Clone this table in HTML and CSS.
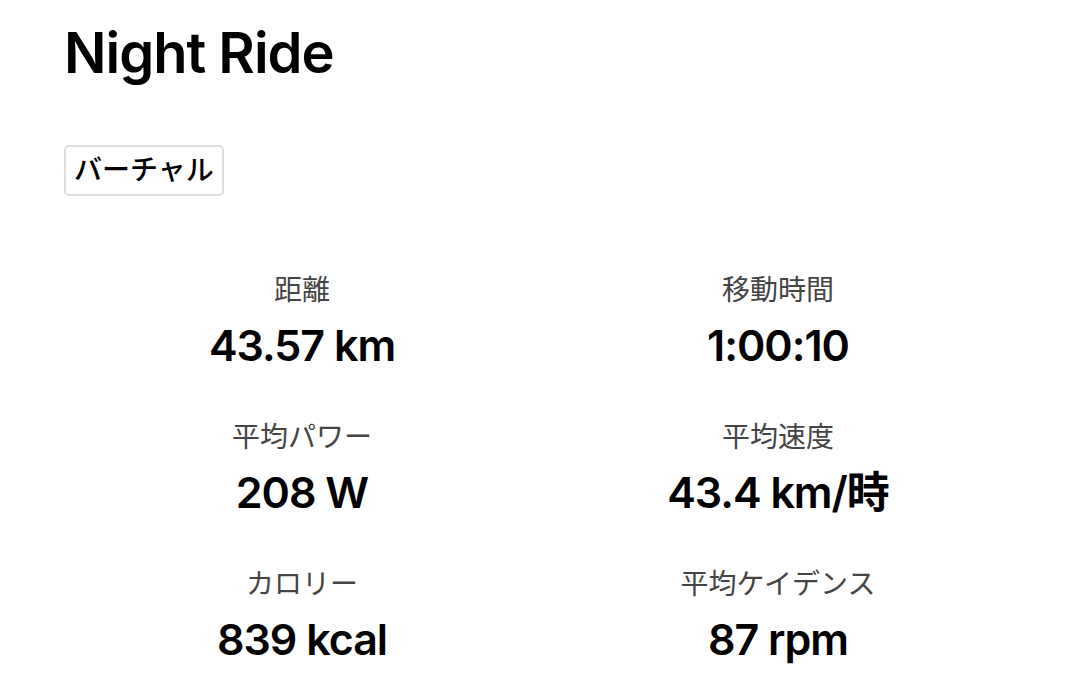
FILE: index.html
```html
<!DOCTYPE html>
<html lang="ja">
<head>
<meta charset="utf-8">
<title>Night Ride</title>
<link rel="stylesheet" href="styles.css">
</head>
<body>
<main class="page">
  <h1 class="title">Night Ride</h1>
  <div class="tags"><span class="tag">バーチャル</span></div>
  <section class="stats">
    <div class="stat"><div class="label">距離</div><div class="value">43.57 km</div></div>
    <div class="stat"><div class="label">移動時間</div><div class="value">1:00:10</div></div>
    <div class="stat"><div class="label">平均パワー</div><div class="value">208 W</div></div>
    <div class="stat"><div class="label">平均速度</div><div class="value">43.4 km/時</div></div>
    <div class="stat"><div class="label">カロリー</div><div class="value">839 kcal</div></div>
    <div class="stat"><div class="label">平均ケイデンス</div><div class="value">87 rpm</div></div>
  </section>
</main>
</body>
</html>
```
FILE: styles.css
```css
html, body {
  margin: 0;
  padding: 0;
  background: #fff;
}
body {
  font-family: Inter, "Noto Sans CJK JP", sans-serif;
  color: #000;
}
.page {
  padding: 20px 64px 0 64px;
}
.title {
  margin: 0;
  font-size: 56px;
  font-weight: 600;
  line-height: 1.2;
  letter-spacing: -1px;
}
.tags {
  margin-top: 58px;
  display: flex;
}
.tag {
  display: inline-block;
  border: 2px solid #dedede;
  border-radius: 5px;
  padding: 5px 8px 6px 8px;
  font-size: 28px;
  font-weight: 500;
  line-height: 36px;
}
.stats {
  margin-top: 75px;
  display: grid;
  grid-template-columns: 1fr 1fr;
  row-gap: 46px;
  text-align: center;
}
.label {
  font-size: 28px;
  line-height: 38px;
  color: #444;
}
.value {
  margin-top: 9px;
  font-size: 43px;
  font-weight: 600;
  line-height: 54px;
  letter-spacing: -1px;
}
```
